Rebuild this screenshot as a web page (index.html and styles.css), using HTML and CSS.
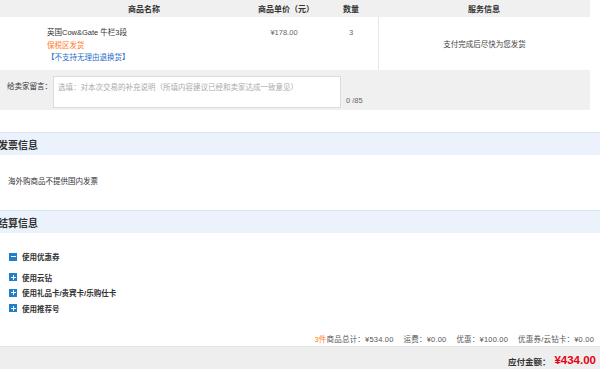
FILE: index.html
```html
<!DOCTYPE html>
<html lang="zh-CN">
<head>
<meta charset="utf-8">
<title>订单确认</title>
<link rel="stylesheet" href="styles.css">
</head>
<body>
<div class="page">
  <div class="goods">
    <div class="thead">
      <div class="th th-name">商品名称</div>
      <div class="th">商品单价（元）</div>
      <div class="th">数量</div>
      <div class="th">服务信息</div>
    </div>
    <div class="trow">
      <div class="td td-name">
        <div class="g-title">英国Cow&amp;Gate 牛栏3段</div>
        <div class="g-ship">保税区发货</div>
        <div class="g-link">【不支持无理由退换货】</div>
      </div>
      <div class="td td-price">¥178.00</div>
      <div class="td td-qty">3</div>
      <div class="td td-service">支付完成后尽快为您发货</div>
    </div>
    <div class="note">
      <span class="note-label">给卖家留言：</span>
      <div class="note-box">选填：对本次交易的补充说明（所填内容建议已经和卖家达成一致意见）</div>
      <span class="note-count">0 /85</span>
    </div>
  </div>

  <div class="sec sec-invoice">
    <div class="sec-title"><span>发票信息</span></div>
    <div class="invoice-body">海外购商品不提供国内发票</div>
  </div>

  <div class="sec sec-settle">
    <div class="sec-title"><span>结算信息</span></div>
    <ul class="opts">
      <li class="opt opt-open"><i class="ico ico-minus"></i>使用优惠券</li>
      <li class="opt"><i class="ico ico-plus"></i>使用云钻</li>
      <li class="opt"><i class="ico ico-plus"></i>使用礼品卡/贵宾卡/乐购仕卡</li>
      <li class="opt"><i class="ico ico-plus"></i>使用推荐号</li>
    </ul>
    <div class="summary">
      <span><em class="cnt">3件</em>商品总计：¥534.00</span>
      <span>运费：¥0.00</span>
      <span>优惠：¥100.00</span>
      <span>优惠券/云钻卡：¥0.00</span>
    </div>
  </div>

  <div class="total">
    <span class="total-label">应付金额：</span><span class="total-num">¥434.00</span>
  </div>
</div>
</body>
</html>
```

FILE: styles.css
```css
* { box-sizing: border-box; }
html, body { margin: 0; padding: 0; background: #fff; }
body {
  font-family: "Liberation Sans", "Noto Sans CJK SC", sans-serif;
  font-size: 7.5px;
  color: #333;
  width: 600px;
  height: 369px;
  overflow: hidden;
}
.page { width: 600px; }

.goods { width: 590px; }
.thead {
  display: grid;
  grid-template-columns: 248px 76px 54px 212px;
  height: 17px;
  background: #f0f0f0;
  align-items: center;
}
.th { text-align: center; font-weight: bold; font-size: 8px; color: #333; }
.th-name { padding-left: 40px; }

.trow {
  display: grid;
  grid-template-columns: 248px 76px 54px 212px;
  height: 53px;
}
.td-name { padding: 10px 0 0 47px; line-height: 12.5px; }
.g-title { color: #333; }
.g-ship { color: #ff7a1a; }
.g-link { color: #2a6fc9; }
.td-price, .td-qty { text-align: center; padding-top: 10px; line-height: 12.5px; color: #666; }
.td-price { padding-right: 4px; }
.td-service {
  border-left: 1px solid #e6e6e6;
  display: flex;
  align-items: center;
  justify-content: center;
  color: #444;
}

.note {
  background: #f0f0f0;
  height: 40px;
  display: flex;
  align-items: flex-start;
  padding: 6px 0 0 7px;
}
.note-label { margin-top: 4px; width: 46px; color: #333; }
.note-box {
  width: 288px;
  height: 32px;
  background: #fff;
  border: 1px solid #dcdcdc;
  color: #aaa;
  padding: 4px 0 0 4px;
}
.note-count { margin: 20px 0 0 5px; color: #666; }

.sec-title {
  height: 23px;
  border-top: 1px solid #d7e6f6;
  background: #ebf2fb;
  display: flex;
  align-items: center;
  font-size: 10px;
  font-weight: bold;
  color: #333;
}
.sec-title span { margin-left: -2px; }
.sec-invoice { margin-top: 22px; }
.invoice-body { height: 55px; padding: 20px 0 0 8px; color: #333; }

.opts { list-style: none; margin: 0; padding: 16px 0 0 9px; }
.opt { display: flex; align-items: center; height: 15.5px; font-weight: bold; color: #333; }
.opt-open { margin-bottom: 5px; }
.ico {
  display: inline-block;
  position: relative;
  width: 8px;
  height: 8px;
  background: #1f7fc9;
  margin-right: 5px;
}
.ico::before {
  content: "";
  position: absolute;
  left: 1.5px; top: 3.5px;
  width: 5px; height: 1px;
  background: #fff;
}
.ico-plus::after {
  content: "";
  position: absolute;
  left: 3.5px; top: 1.5px;
  width: 1px; height: 5px;
  background: #fff;
}

.summary {
  display: flex;
  justify-content: flex-end;
  gap: 10px;
  padding: 17px 6px 0 0;
  height: 30px;
  color: #555;
  letter-spacing: 0.2px;
}
.summary em { font-style: normal; }
.cnt { color: #ff7a1a; }

.total {
  height: 23px;
  background: #eeeeee;
  border-top: 1px solid #e4e4e4;
  display: flex;
  justify-content: flex-end;
  align-items: center;
  padding: 6px 4px 0 0;
}
.total-label { font-size: 8.5px; font-weight: bold; color: #333; margin-right: 4px; }
.total-num { font-size: 11.5px; font-weight: bold; color: #e60012; line-height: 1; }
```
